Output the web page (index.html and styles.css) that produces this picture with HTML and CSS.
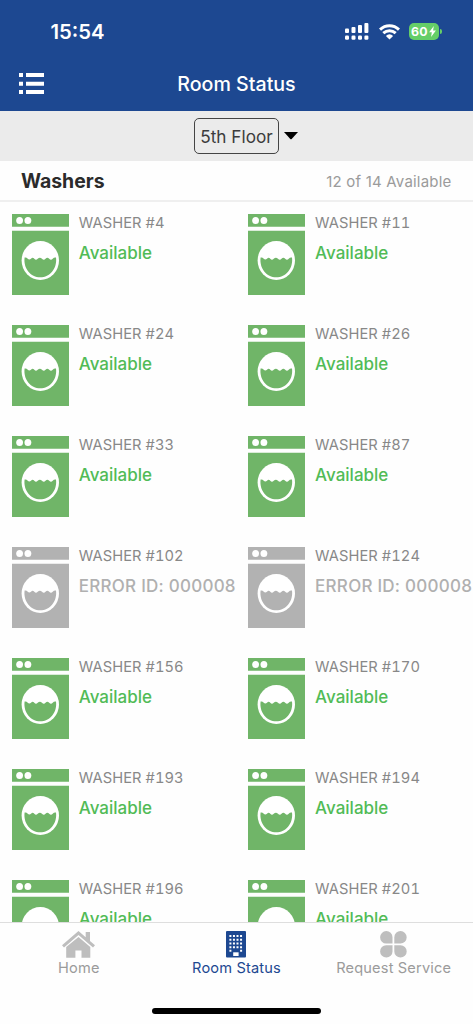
FILE: index.html
```html
<!DOCTYPE html>
<html lang="en">
<head>
<meta charset="utf-8">
<meta name="viewport" content="width=device-width, initial-scale=1">
<title>Room Status</title>
<link rel="stylesheet" href="styles.css">
</head>
<body>
<svg class="symbols" aria-hidden="true">
  <symbol id="washer" viewBox="0 0 57 81">
    <path fill="currentColor" d="M0 0H57V12.7H0ZM0 16.8H57V81H0Z"/>
    <ellipse cx="7.6" cy="6.5" rx="3.4" ry="3.6" fill="#fff"/>
    <ellipse cx="15.9" cy="6.5" rx="3.4" ry="3.6" fill="#fff"/>
    <ellipse cx="28.3" cy="46.5" rx="18.7" ry="19.5" fill="#fff"/>
    <path fill="currentColor" d="M12.6 43.5Q14.6 43.1 15.5 44.6Q17.3 46.5 19 44.8Q20.6 42.5 22.3 44.8Q24 46.5 25.7 44.8Q27.9 42.5 30 44.8Q31.8 46.5 33.5 44.8Q35.4 42.5 37.2 44.8Q39 46.5 40.7 44.8Q42 43.1 44 43.5C45.4 54.4 38 63.3 28.3 63.3S11.2 54.4 12.6 43.5Z"/>
  </symbol>
</svg>
<div class="app">
  <header class="header">
    <div class="status-bar">
      <span class="time">15:54</span>
      <div class="indicators">
        <svg class="signal" width="24" height="17" viewBox="0 0 24 17" fill="#fff">
          <rect x="0" y="5.4" width="4" height="4.7" rx="1"/><rect x="6.5" y="4" width="4" height="6.1" rx="1"/><rect x="13" y="2" width="4" height="8.1" rx="1"/><rect x="19.4" y="0" width="4" height="10.1" rx="1"/>
          <rect x="0" y="12.5" width="4" height="4.2" rx="1.2"/><rect x="6.5" y="12.5" width="4" height="4.2" rx="1.2"/><rect x="13" y="12.5" width="4" height="4.2" rx="1.2"/><rect x="19.4" y="12.5" width="4" height="4.2" rx="1.2"/>
        </svg>
        <svg class="wifi" width="21" height="16" viewBox="0 0 21 16" fill="none" stroke="#fff" stroke-width="3">
          <path d="M1 5.6Q5.1 1.7 10.5 1.7T20 5.6M4.3 9.2Q7.1 6.7 10.5 6.7T16.7 9.2"/>
          <path fill="#fff" stroke="none" d="M10.5 15.4L6.9 11.9Q8.5 10.2 10.5 10.2T14.1 11.9Z"/>
        </svg>
        <div class="battery"><span>60</span><svg width="7" height="11" viewBox="0 0 7 11"><path fill="#fff" d="M4.8 0L.1 6.2H2.8L2.1 11L6.9 4.5H4.1Z"/></svg></div>
      </div>
    </div>
    <div class="nav-bar">
      <svg class="menu" width="25" height="21" viewBox="0 0 25 21" fill="#fff"><path d="M0 0H4V4H0ZM7 0H25V4H7ZM0 8.7H4V12.7H0ZM7 8.7H25V12.7H7ZM0 17H4V21H0ZM7 17H25V21H7Z"/></svg>
      <h1 class="title">Room Status</h1>
    </div>
  </header>
  <div class="floor-bar">
    <span class="floor">5th Floor</span>
    <svg class="caret" width="14" height="8" viewBox="0 0 14 8"><path d="M0 0H14L7.7 6.9Q7 7.6 6.3 6.9Z"/></svg>
  </div>
  <div class="section-head">
    <h2 class="section-title">Washers</h2>
    <span class="count">12 of 14 Available</span>
  </div>
  <main class="grid">
    <div class="machine"><svg class="icon"><use href="#washer"/></svg><div class="info"><div class="name">WASHER #4</div><div class="state">Available</div></div></div>
    <div class="machine"><svg class="icon"><use href="#washer"/></svg><div class="info"><div class="name">WASHER #11</div><div class="state">Available</div></div></div>
    <div class="machine"><svg class="icon"><use href="#washer"/></svg><div class="info"><div class="name">WASHER #24</div><div class="state">Available</div></div></div>
    <div class="machine"><svg class="icon"><use href="#washer"/></svg><div class="info"><div class="name">WASHER #26</div><div class="state">Available</div></div></div>
    <div class="machine"><svg class="icon"><use href="#washer"/></svg><div class="info"><div class="name">WASHER #33</div><div class="state">Available</div></div></div>
    <div class="machine"><svg class="icon"><use href="#washer"/></svg><div class="info"><div class="name">WASHER #87</div><div class="state">Available</div></div></div>
    <div class="machine error"><svg class="icon"><use href="#washer"/></svg><div class="info"><div class="name">WASHER #102</div><div class="state">ERROR ID: 000008</div></div></div>
    <div class="machine error"><svg class="icon"><use href="#washer"/></svg><div class="info"><div class="name">WASHER #124</div><div class="state">ERROR ID: 000008</div></div></div>
    <div class="machine"><svg class="icon"><use href="#washer"/></svg><div class="info"><div class="name">WASHER #156</div><div class="state">Available</div></div></div>
    <div class="machine"><svg class="icon"><use href="#washer"/></svg><div class="info"><div class="name">WASHER #170</div><div class="state">Available</div></div></div>
    <div class="machine"><svg class="icon"><use href="#washer"/></svg><div class="info"><div class="name">WASHER #193</div><div class="state">Available</div></div></div>
    <div class="machine"><svg class="icon"><use href="#washer"/></svg><div class="info"><div class="name">WASHER #194</div><div class="state">Available</div></div></div>
    <div class="machine"><svg class="icon"><use href="#washer"/></svg><div class="info"><div class="name">WASHER #196</div><div class="state">Available</div></div></div>
    <div class="machine"><svg class="icon"><use href="#washer"/></svg><div class="info"><div class="name">WASHER #201</div><div class="state">Available</div></div></div>
  </main>
  <footer class="tab-bar">
    <nav class="tabs">
      <a class="tab">
        <svg width="33" height="27" viewBox="0 0 33 27" fill="#bebebe"><path d="M16.5 0L23.7 6.2V1H28V9.9L33 14.2L31 16.4L16.5 4L2 16.4L0 14.2Z"/><path d="M16.5 6L28.3 16V26.7H19.5V19.4H13.4V26.7H4.2V16Z"/></svg>
        <span>Home</span>
      </a>
      <a class="tab active">
        <svg width="20" height="27" viewBox="0 0 20 27"><rect width="20" height="26.6" rx="1" fill="#1d4891"/><path fill="none" stroke="#fff" stroke-width="2" stroke-dasharray="2 1.55" d="M3.4 5.1H16.2M3.4 8.8H16.2M3.4 12.5H16.2M3.4 16.2H16.2M3.4 19.8H5.4M14.1 19.8H16.1"/><path fill="#fff" d="M7.2 21.3H12.6V25H7.2Z"/></svg>
        <span>Room Status</span>
      </a>
      <a class="tab">
        <svg width="27" height="27" viewBox="0 0 27 27" fill="#bebebe"><path d="M12.5 12.5H6.2A6.2 6.2 0 1 1 12.5 6.2ZM14.3 12.5H20.5A6.2 6.2 0 1 0 14.3 6.2ZM12.5 14.2H6.2A6.2 6.2 0 1 0 12.5 20.4ZM14.3 14.2H20.5A6.2 6.2 0 1 1 14.3 20.4Z"/></svg>
        <span>Request Service</span>
      </a>
    </nav>
    <div class="home-indicator"></div>
  </footer>
</div>
</body>
</html>
```
FILE: styles.css
```css
* { box-sizing: border-box; }
body { margin: 0; font-family: Inter, "Liberation Sans", sans-serif; background: #fefefe; }
h1, h2 { margin: 0; }
svg { display: block; flex: none; }
.symbols { display: none; }
.app { width: 473px; height: 1024px; display: flex; flex-direction: column; overflow: hidden; white-space: nowrap; }

.header { flex: none; height: 111px; background: #1d4891; color: #fff; }
.status-bar { height: 60px; padding: 3px 31.5px 0 50.5px; display: flex; align-items: center; justify-content: space-between; }
.time { font-size: 20.3px; font-weight: 600; letter-spacing: 0; }
.indicators { display: flex; align-items: center; }
.wifi { margin-left: 9.5px; }
.battery { position: relative; margin-left: 9px; margin-right: 3px; width: 30px; height: 17px; border-radius: 5px; background: #65ce67; display: flex; align-items: center; justify-content: center; gap: 1px; font-size: 12.3px; font-weight: 700; letter-spacing: .3px; }
.battery::after { content: ""; position: absolute; left: 31px; top: 6px; width: 2px; height: 5px; border-radius: 0 2px 2px 0; background: #65ce67; }
.nav-bar { height: 51px; display: grid; grid-template-columns: 80px 1fr 80px; align-items: center; padding-bottom: 4px; }
.menu { margin-left: 19.3px; }
.title { text-align: center; font-size: 19.6px; line-height: 26px; font-weight: 500; }

.floor-bar { flex: none; height: 50px; background: #ebebeb; display: flex; align-items: center; padding-left: 194px; gap: 5px; }
.floor { width: 85px; height: 36px; border: 1.3px solid #444; border-radius: 5px; color: #3c3c3c; font-size: 17.2px; line-height: 35px; text-align: center; }

.section-head { flex: none; height: 41px; border-bottom: 2px solid #efefef; display: flex; align-items: center; justify-content: space-between; padding: 1px 21.5px 0 21px; }
.section-title { font-size: 19.4px; font-weight: 700; color: #2b2b2b; }
.count { font-size: 15px; color: #9b9b9b; letter-spacing: .2px; }

.grid { flex: 1; min-height: 0; overflow: hidden; padding-top: 12px; display: grid; grid-template-columns: 236.3px 236.7px; grid-auto-rows: 110.93px; }
.machine { min-width: 0; display: flex; padding-left: 11.8px; gap: 10px; color: #70b568; }
.icon { width: 57px; height: 81px; }
.info { margin-top: -0.6px; }
.name { font-size: 14.7px; line-height: 20px; color: #888; letter-spacing: .06px; font-variant-numeric: tabular-nums; }
.state { margin-top: 8px; font-size: 17px; line-height: 24px; font-weight: 500; color: #51bb56; }
.error { color: #b2b2b2; }
.error .state { color: #b0b0b0; letter-spacing: .25px; }

.tab-bar { flex: none; height: 102px; border-top: 1.4px solid #dedede; background: #fefefe; display: flex; flex-direction: column; align-items: center; }
.tabs { width: 100%; height: 84.5px; padding-top: 8px; display: grid; grid-template-columns: repeat(3, 1fr); }
.tab { display: flex; flex-direction: column; align-items: center; font-size: 14.6px; line-height: 20px; letter-spacing: .16px; color: #9b9b9b; }
.tab:last-child { padding-right: 1px; }
.tab.active { color: #1d4891; }
.home-indicator { width: 169px; height: 6px; border-radius: 3px; background: #000; }
```
